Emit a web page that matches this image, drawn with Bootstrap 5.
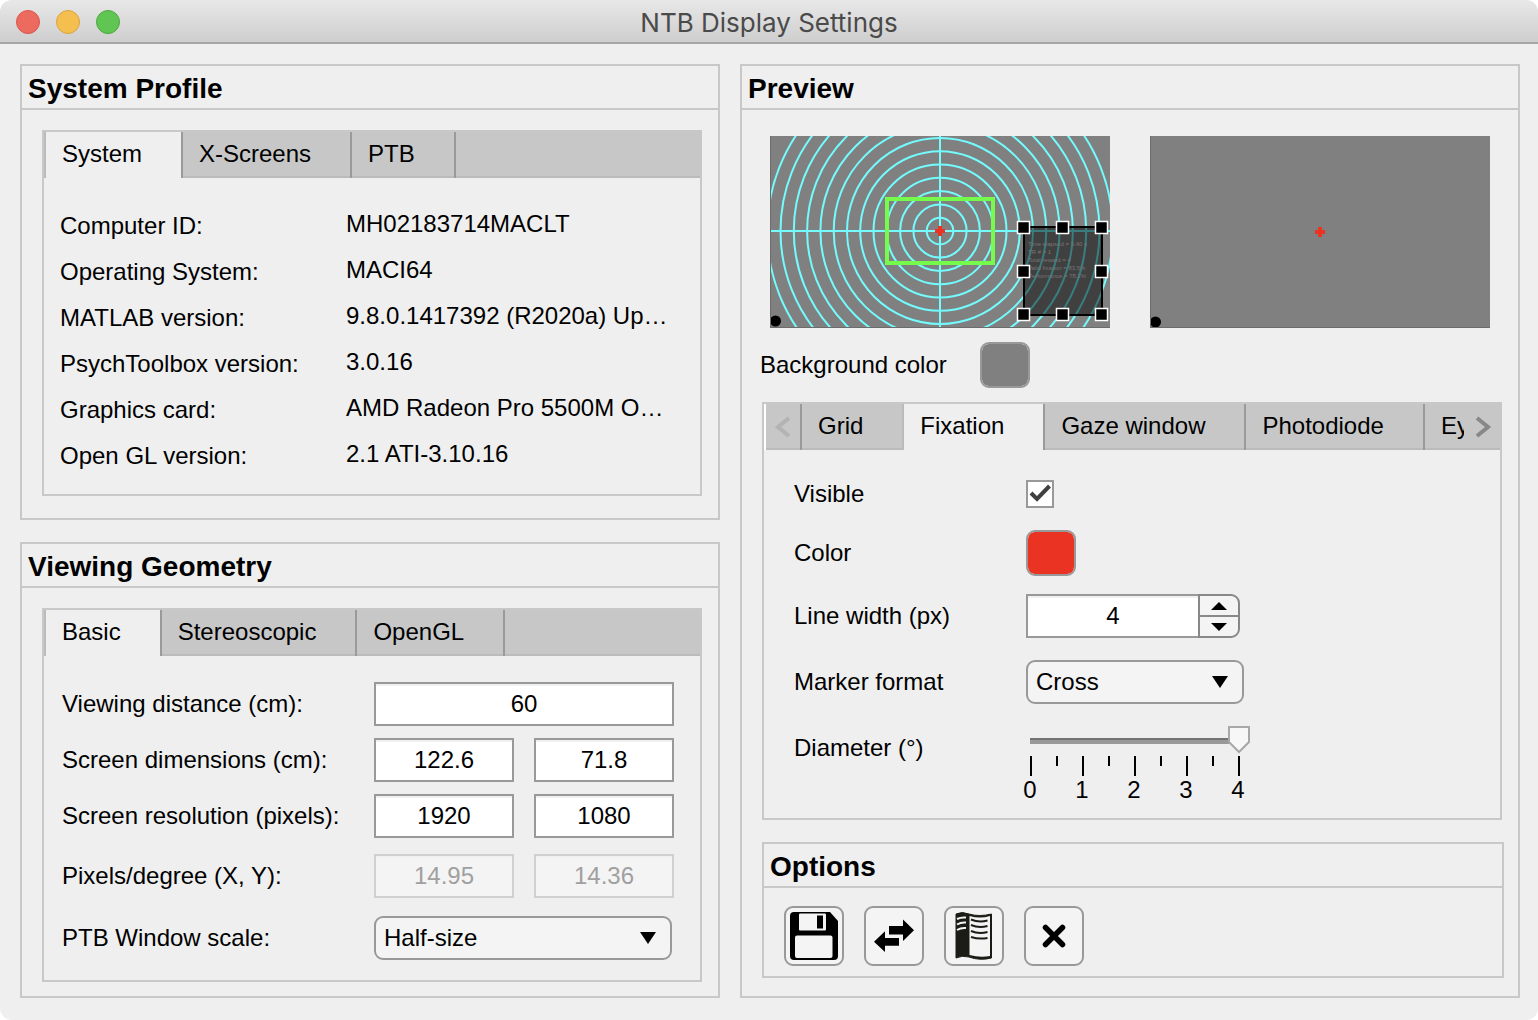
<!DOCTYPE html>
<html lang="en">
<head>
<meta charset="utf-8">
<meta name="viewport" content="width=device-width, initial-scale=1">
<title>NTB Display Settings</title>
<link href="https://cdn.jsdelivr.net/npm/bootstrap@5.3.0/dist/css/bootstrap.min.css" rel="stylesheet">
<style>
:root { --face:#efefef; --line:#c8c8c8; --edge:#999; --tab:#c7c7c7; }
body { font-family:"Liberation Sans", Arial, sans-serif; font-size:24px; line-height:28px; color:#000; background:#fff; }
.app-window { min-height:100vh; background:var(--face); border-radius:12px; overflow:hidden; }
.title-bar { height:44px; padding-top:4px; background:linear-gradient(#e8e8e8,#cecece); border-bottom:2px solid #a6a6a6; }
.title-bar h1 { font-family:Inter, Roboto, sans-serif; font-size:26px; line-height:32px; font-weight:400; color:#4a4a4a; }
.lights { left:16px; top:10px; gap:16px; }
.light { width:24px; height:24px; border-radius:50%; border:1px solid; padding:0; }
.light-close { background:#ed6a5e; border-color:#d9564b; }
.light-min { background:#f5bf4f; border-color:#d9a33c; }
.light-zoom { background:#61c554; border-color:#4ca83d; }
.main-area { padding:20px 18px 22px 20px; gap:20px; }
.col-left { flex:35 1 0; gap:22px; min-width:0; }
.col-left > .group-box { flex:1 1 0; }
.col-right { flex:39 1 0; min-width:0; }
.group-box { border:2px solid var(--line); }
.group-title { font-size:28px; line-height:38px; font-weight:700; margin:0; padding:4px 0 0 6px; border-bottom:2px solid var(--line); }
.left-body { padding:20px 16px 0 20px; flex:1; }
.tab-box { border:2px solid var(--line); }
.tab-strip { height:46px; background:var(--tab); box-shadow:inset 0 -2px #bbb; }
.tab-strip .nav-link { height:46px; padding:0 39px 2px 16px; border:0 solid #9a9a9a; border-left-width:2px; border-radius:0; color:#000; background:none; white-space:nowrap; line-height:28px; }
.tab-strip .nav-link.active { background:var(--face); border-left-color:#bbb; }
.tab-strip .last-tab .nav-link { border-right-width:2px; }
.tab-scroll { overflow:hidden; flex:1; min-width:0; }
.scroll-btn { width:36px; height:46px; padding:0 0 4px; border:0; background:none; flex:none; }
.scroll-prev { border-left:2px solid #fff; }
.facts { display:grid; grid-template-columns:286px 1fr; grid-auto-rows:46px; align-items:center; margin:0; padding:25px 16px 15px; }
.facts dt { font-weight:400; }
.facts dd { margin:0; padding-bottom:4px; white-space:nowrap; }
.geometry { padding:26px 26px 20px 18px; }
.geometry .field-row > label { width:312px; flex:none; }
.geometry .fields { flex:1; gap:20px; min-width:0; }
.geometry .drop { margin-right:2px; }
.field-row { display:flex; align-items:center; }
.gap-s { margin-top:12px; }
.gap-m { margin-top:18px; }
.gap-l { margin-top:22px; }
.box-input { height:44px; padding:0 8px; border:2px solid var(--edge); border-radius:0; background:#fff; color:#000; font-size:24px; line-height:28px; text-align:center; box-shadow:inset 0 2px #f1f1f1; }
.box-input:disabled { background:#f4f4f4; color:#a0a0a0; border-color:#d0d0d0; opacity:1; }
.drop { height:44px; padding:0 40px 0 8px; border:2px solid var(--edge); border-radius:9px; color:#000; font-size:24px; line-height:28px; background:#f4f4f4 url("data:image/svg+xml,%3Csvg xmlns='http://www.w3.org/2000/svg' width='16' height='12'%3E%3Cpath d='M0 0h16L8 12z'/%3E%3C/svg%3E") no-repeat right 14px center / 16px 12px; }
.previews { padding:26px 28px 0; gap:40px; }
.previews svg { flex:1 1 0; min-width:0; height:auto; display:block; }
.bg-row { padding:14px 18px; }
.bg-row label { width:220px; }
.swatch { width:50px; height:46px; padding:0; border:2px solid var(--edge); border-radius:9px; appearance:none; overflow:hidden; background:none; }
.swatch::-webkit-color-swatch-wrapper { padding:0; }
.swatch::-webkit-color-swatch { border:0; border-radius:6px; }
.view-tabs { margin:0 16px 0 20px; }
.fixation { padding:30px 30px 14px; }
.fixation .field-row > label { width:232px; flex:none; }
.tick { width:28px; height:28px; margin:0; border:2px solid var(--edge); border-radius:0 !important; background-color:#fff; }
.tick:checked { border-color:var(--edge); background:#fff url("data:image/svg+xml,%3Csvg xmlns='http://www.w3.org/2000/svg' viewBox='0 0 24 24'%3E%3Cpath d='M3 11l6 6L21.500 4' fill='none' stroke='%23404040' stroke-width='4'/%3E%3C/svg%3E") center / 24px 24px no-repeat; }
.line-width { width:172px; border-right:0; appearance:textfield; }
.line-width::-webkit-inner-spin-button { appearance:none; margin:0; }
.step-col { width:42px; height:44px; border:2px solid #888; border-radius:0 9px 9px 0; background:#f4f4f4; overflow:hidden; }
.step-col button { flex:1; padding:0; border:0; background:none; display:flex; align-items:center; justify-content:center; }
.step-col button + button { border-top:2px solid #888; }
.marker { width:218px; }
.scale { width:260px; margin-left:-22px; }
.slider { display:block; width:231px; height:28px; margin:0 15px 2px; appearance:none; background:linear-gradient(#737373 0 2px,#999 2px) no-repeat 11px 12px / 209px 6px; }
.slider::-webkit-slider-thumb { appearance:none; width:22px; height:28px; border:0; border-radius:0; background:url("data:image/svg+xml,%3Csvg xmlns='http://www.w3.org/2000/svg' width='22' height='28'%3E%3Cpath d='M1 1h20v15L11 26 1 16z' fill='%23f7f7f7' stroke='%23a8a8a8' stroke-width='2'/%3E%3C/svg%3E") no-repeat; }
.scale svg { display:block; }
.scale-nums span { flex:1; text-align:center; }
.options { margin:22px 14px 18px 20px; }
.tools { padding:18px 20px 10px; gap:20px; }
.tool { width:60px; height:60px; padding:0; border:2px solid var(--edge); border-radius:9px; background:#f4f4f4; }
.tool svg { display:block; width:56px; height:56px; }
</style>
<script src="https://cdn.jsdelivr.net/npm/bootstrap@5.3.0/dist/js/bootstrap.bundle.min.js"></script>
</head>
<body>
<div class="app-window d-flex flex-column">
  <header class="title-bar position-relative d-flex justify-content-center align-items-center">
    <div class="lights position-absolute d-flex">
      <button class="light light-close" aria-label="Close"></button>
      <button class="light light-min" aria-label="Minimize"></button>
      <button class="light light-zoom" aria-label="Zoom"></button>
    </div>
    <h1 class="m-0">NTB Display Settings</h1>
  </header>

  <main class="main-area d-flex flex-grow-1">
    <div class="col-left d-flex flex-column">
      <section class="group-box">
        <h2 class="group-title">System Profile</h2>
        <div class="left-body">
          <div class="tab-box">
            <ul class="nav tab-strip flex-nowrap" role="tablist">
              <li class="nav-item"><button class="nav-link active" role="tab">System</button></li>
              <li class="nav-item"><button class="nav-link" role="tab">X-Screens</button></li>
              <li class="nav-item last-tab"><button class="nav-link" role="tab">PTB</button></li>
            </ul>
            <dl class="facts">
              <dt>Computer ID:</dt><dd>MH02183714MACLT</dd>
              <dt>Operating System:</dt><dd>MACI64</dd>
              <dt>MATLAB version:</dt><dd>9.8.0.1417392 (R2020a) Up…</dd>
              <dt>PsychToolbox version:</dt><dd>3.0.16</dd>
              <dt>Graphics card:</dt><dd>AMD Radeon Pro 5500M O…</dd>
              <dt>Open GL version:</dt><dd>2.1 ATI-3.10.16</dd>
            </dl>
          </div>
        </div>
      </section>

      <section class="group-box">
        <h2 class="group-title">Viewing Geometry</h2>
        <div class="left-body">
          <div class="tab-box">
            <ul class="nav tab-strip flex-nowrap" role="tablist">
              <li class="nav-item"><button class="nav-link active" role="tab">Basic</button></li>
              <li class="nav-item"><button class="nav-link" role="tab">Stereoscopic</button></li>
              <li class="nav-item last-tab"><button class="nav-link" role="tab">OpenGL</button></li>
            </ul>
            <form class="geometry">
              <div class="field-row">
                <label for="distance">Viewing distance (cm):</label>
                <div class="fields d-flex"><input id="distance" class="form-control box-input" value="60"></div>
              </div>
              <div class="field-row gap-s">
                <label for="dimx">Screen dimensions (cm):</label>
                <div class="fields d-flex"><input id="dimx" class="form-control box-input" value="122.6"><input aria-label="Screen height (cm)" class="form-control box-input" value="71.8"></div>
              </div>
              <div class="field-row gap-s">
                <label for="resx">Screen resolution (pixels):</label>
                <div class="fields d-flex"><input id="resx" class="form-control box-input" value="1920"><input aria-label="Vertical resolution" class="form-control box-input" value="1080"></div>
              </div>
              <div class="field-row mt-3">
                <label for="ppdx">Pixels/degree (X, Y):</label>
                <div class="fields d-flex"><input id="ppdx" class="form-control box-input" value="14.95" disabled><input aria-label="Pixels per degree Y" class="form-control box-input" value="14.36" disabled></div>
              </div>
              <div class="field-row gap-m">
                <label for="wscale">PTB Window scale:</label>
                <div class="fields d-flex"><select id="wscale" class="form-select drop"><option>Half-size</option></select></div>
              </div>
            </form>
          </div>
        </div>
      </section>
    </div>

    <div class="col-right d-flex flex-column">
    <section class="group-box flex-grow-1">
      <h2 class="group-title">Preview</h2>
      <div class="previews d-flex">
        <svg viewBox="0 0 340 192" role="img" aria-label="Experimenter view">
          <rect width="340" height="192" fill="#808080"/>
          <g fill="none" stroke="#73fbfd" stroke-width="2">
            <path d="M0 95H340M170 0V192"/>
            <circle cx="170" cy="95" r="13.300"/><circle cx="170" cy="95" r="26.600"/><circle cx="170" cy="95" r="39.900"/>
            <circle cx="170" cy="95" r="53.200"/><circle cx="170" cy="95" r="66.500"/><circle cx="170" cy="95" r="79.800"/>
            <circle cx="170" cy="95" r="93"/><circle cx="170" cy="95" r="106.300"/><circle cx="170" cy="95" r="119.600"/>
            <circle cx="170" cy="95" r="132.900"/><circle cx="170" cy="95" r="146.200"/><circle cx="170" cy="95" r="159.500"/>
            <circle cx="170" cy="95" r="172.800"/>
          </g>
          <rect x="117" y="63" width="106" height="64" fill="none" stroke="#75fb4c" stroke-width="4"/>
          <path d="M168 90h4v3h3v4h-3v3h-4v-3h-3v-4h3z" fill="#ea3323"/>
          <rect x="254" y="91" width="78" height="88" fill="#000" fill-opacity=".5" stroke="#000" stroke-width="2"/>
          <g fill="#767676" font-size="6" font-family="Liberation Sans, Arial, sans-serif">
            <text x="258" y="110">Time elapsed = 5.40 s</text>
            <text x="258" y="118">TR # = 1</text>
            <text x="258" y="126">Total reward = 4</text>
            <text x="258" y="134">Valid fixation = 83.5%</text>
            <text x="258" y="142">Performance = 78.2%</text>
          </g>
          <g fill="#000" stroke="#fff" stroke-width="1.500">
            <rect x="247.500" y="85.500" width="12" height="12"/><rect x="286.500" y="85.500" width="12" height="12"/><rect x="325.500" y="85.500" width="12" height="12"/>
            <rect x="247.500" y="129.500" width="12" height="12"/><rect x="325.500" y="129.500" width="12" height="12"/>
            <rect x="247.500" y="172.500" width="12" height="12"/><rect x="286.500" y="172.500" width="12" height="12"/><rect x="325.500" y="172.500" width="12" height="12"/>
          </g>
          <circle cx="5.500" cy="185" r="5.500"/>
          <path d="M.5 0V191.500H340" fill="none" stroke="#6c6c6c"/>
        </svg>
        <svg viewBox="0 0 340 192" role="img" aria-label="Subject view">
          <rect width="340" height="192" fill="#808080"/>
          <path d="M168 91h4v3h3v4h-3v3h-4v-3h-3v-4h3z" fill="#ea3323"/>
          <circle cx="5.500" cy="186" r="5.500"/>
          <path d="M.5 0V191.500H340" fill="none" stroke="#6c6c6c"/>
        </svg>
      </div>
      <div class="bg-row d-flex align-items-center">
        <label for="bgcolor">Background color</label>
        <input type="color" id="bgcolor" class="swatch" value="#808080">
      </div>

      <div class="tab-box view-tabs">
        <div class="tab-strip d-flex">
          <button class="scroll-btn scroll-prev" aria-label="Previous tabs"><svg width="20" height="24" viewBox="0 0 20 24"><path d="M16 3L5 12l11 9" fill="none" stroke="#b3b3b3" stroke-width="4"/></svg></button>
          <div class="tab-scroll">
            <ul class="nav flex-nowrap" role="tablist">
              <li class="nav-item"><button class="nav-link" role="tab">Grid</button></li>
              <li class="nav-item"><button class="nav-link active" role="tab">Fixation</button></li>
              <li class="nav-item"><button class="nav-link" role="tab">Gaze window</button></li>
              <li class="nav-item"><button class="nav-link" role="tab">Photodiode</button></li>
              <li class="nav-item"><button class="nav-link" role="tab">Ey</button></li>
            </ul>
          </div>
          <button class="scroll-btn" aria-label="Next tabs"><svg width="20" height="24" viewBox="0 0 20 24"><path d="M5 3l11 9-11 9" fill="none" stroke="#888" stroke-width="4"/></svg></button>
        </div>
        <form class="fixation">
          <div class="field-row">
            <label for="visible">Visible</label>
            <input type="checkbox" id="visible" class="form-check-input tick" checked>
          </div>
          <div class="field-row gap-l">
            <label for="fixcolor">Color</label>
            <input type="color" id="fixcolor" class="swatch" value="#ea3323">
          </div>
          <div class="field-row gap-m">
            <label for="linewidth">Line width (px)</label>
            <input type="number" id="linewidth" class="box-input line-width" value="4">
            <div class="step-col d-flex flex-column">
              <button type="button" aria-label="Increase"><svg width="16" height="8"><path d="M0 8L8 0l8 8z"/></svg></button>
              <button type="button" aria-label="Decrease"><svg width="16" height="8"><path d="M0 0L8 8l8-8z"/></svg></button>
            </div>
          </div>
          <div class="field-row gap-l">
            <label for="marker">Marker format</label>
            <select id="marker" class="form-select drop marker"><option>Cross</option></select>
          </div>
          <div class="field-row align-items-start gap-l">
            <label for="diameter" class="pt-2">Diameter (°)</label>
            <div class="scale">
              <input type="range" id="diameter" class="slider" min="0" max="4" step="any" value="4">
              <svg width="260" height="20" aria-hidden="true"><path d="M27 0v20M79 0v20M131 0v20M183 0v20M235 0v20M53 0v10M105 0v10M157 0v10M209 0v10" stroke="#000" stroke-width="2"/></svg>
              <div class="scale-nums d-flex"><span>0</span><span>1</span><span>2</span><span>3</span><span>4</span></div>
            </div>
          </div>
        </form>
      </div>

      <section class="group-box options">
        <h2 class="group-title">Options</h2>
        <div class="tools d-flex">
          <button class="tool" aria-label="Save"><svg viewBox="2 2 56 56">
            <path d="M10 6H46L54 15V50a4 4 0 0 1-4 4H10a4 4 0 0 1-4-4V10a4 4 0 0 1 4-4z"/>
            <rect x="15" y="7.500" width="27" height="17" rx="1" fill="#f4f4f4"/><path d="M33 9.500h6v13h-6z"/>
            <rect x="11" y="29.500" width="37.500" height="22.500" rx="2" fill="#f4f4f4"/></svg></button>
          <button class="tool" aria-label="Swap"><svg viewBox="2 2 56 56">
            <path d="M25 20H39V13.500L50 24.300 39 35V28.500H25zM10 35.700L21 25.300V32H35V39.700H21V46z"/></svg></button>
          <button class="tool" aria-label="Manual"><svg viewBox="2 2 56 56">
            <path d="M12 8Q18 5 25 8Q35 11 47.500 8V52Q36 55 25 51Q18 49 12 52z" fill="#1c1c16" stroke="#1c1c16" stroke-width="1"/>
            <path d="M25.500 10Q36 13 46 10V50Q36 52 25.500 49z" fill="#f4f4f4"/>
            <path d="M13 13Q17 11 22 11.500M13 18.500Q17 16 22 16.500M13 24Q17 21.500 22 22" fill="none" stroke="#f4f4f4" stroke-width="2"/>
            <path d="M27 13.500Q35 17 43.500 14.500M27 19Q35 22.500 43.500 20M27 25Q35 28.500 43.500 26M27 31Q35 33.500 43.500 32" fill="none" stroke="#1c1c16" stroke-width="2"/></svg></button>
          <button class="tool" aria-label="Close without saving"><svg viewBox="2 2 56 56"><path d="M21.500 21.500L38.500 38.500M38.500 21.500L21.500 38.500" stroke="#000" stroke-width="5.500" stroke-linecap="round"/></svg></button>
        </div>
      </section>
    </section>
    </div>
  </main>
</div>
</body>
</html>
